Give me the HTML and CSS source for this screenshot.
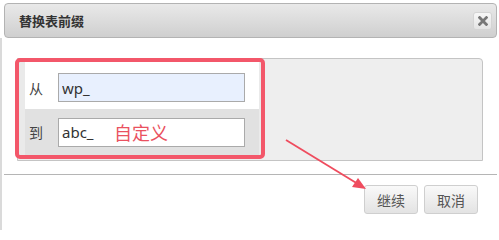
FILE: index.html
```html
<!DOCTYPE html>
<html lang="zh">
<head>
<meta charset="utf-8">
<title>替换表前缀</title>
<link rel="stylesheet" href="styles.css">
</head>
<body>
<div class="dialog">
  <div class="titlebar">
    <span class="title">替换表前缀</span>
    <button class="close" aria-label="关闭">
      <svg width="10" height="10" viewBox="0 0 10 10"><path d="M1.6 1.6 L8.4 8.4 M8.4 1.6 L1.6 8.4" stroke="#777" stroke-width="2.8" stroke-linecap="square"/></svg>
    </button>
  </div>
  <div class="body">
    <div class="panel">
      <div class="highlight">
        <div class="row row-from">
          <span class="label">从</span>
          <input class="field field-blue" value="wp_">
        </div>
        <div class="row row-to">
          <span class="label">到</span>
          <div class="field-wrap">
            <input class="field" value="abc_">
            <span class="note">自定义</span>
          </div>
        </div>
      </div>
    </div>
    <div class="divider"></div>
    <div class="footer">
      <button class="btn">继续</button>
      <button class="btn">取消</button>
    </div>
  </div>
  <svg class="arrow" width="499" height="230" viewBox="0 0 499 230">
    <line x1="286" y1="140" x2="358" y2="184" stroke="#ef4c5e" stroke-width="1.8"/>
    <polygon points="366,189 352,187 358,178" fill="#ef4c5e"/>
  </svg>
</div>
</body>
</html>
```
FILE: styles.css
```css
html, body {
  margin: 0;
  padding: 0;
  background: #ffffff;
}

body {
  font-family: "Noto Sans", "Noto Sans CJK SC", sans-serif;
  color: #333;
}

.dialog {
  position: relative;
  width: 499px;
  height: 230px;
  overflow: hidden;
  background: #fff;
}

.titlebar {
  box-sizing: border-box;
  margin: 3px 2px 0 4px;
  height: 35px;
  border: 1px solid #b3b3b3;
  border-radius: 4px;
  background: linear-gradient(#e9e9e9, #cfcfcf);
  display: flex;
  align-items: center;
  justify-content: space-between;
  padding: 0 4px 0 14px;
}

.title {
  font-family: "Noto Sans CJK SC", sans-serif;
  font-weight: bold;
  font-size: 13px;
  color: #333;
  margin-top: -1px;
}

.close {
  box-sizing: border-box;
  width: 19px;
  height: 18px;
  padding: 0;
  border: 1px solid #d4d4d4;
  border-radius: 3px;
  background: linear-gradient(#f7f7f7, #e4e4e4);
  display: flex;
  align-items: center;
  justify-content: center;
}

.body {
  box-sizing: border-box;
  height: 193px;
  border-left: 2px solid #dadada;
  padding-top: 20px;
}

.panel {
  box-sizing: border-box;
  margin-left: 15px;
  width: 466px;
  height: 103px;
  border: 1px solid #c4c4c4;
  border-radius: 0 4px 0 0;
  background: #eeeeee;
}

.highlight {
  box-sizing: border-box;
  width: 250px;
  height: 101px;
  margin: -1px 0 0 -3px;
  border: 4px solid #f3576a;
  border-radius: 5px;
  background: #eaeaea;
  padding: 0 2px 0 6px;
  display: flex;
  flex-direction: column;
}

.row {
  display: flex;
  align-items: center;
  box-sizing: border-box;
}

.row-from {
  height: 47px;
  padding-top: 4px;
  background: #ffffff;
}

.row-to {
  height: 46px;
  background: #e1e1e1;
}

.label {
  width: 33px;
  box-sizing: border-box;
  padding-left: 4px;
  font-family: "Noto Sans CJK SC", sans-serif;
  font-size: 14px;
  color: #444;
}

.field-wrap {
  position: relative;
  display: flex;
}

.field {
  box-sizing: border-box;
  width: 187px;
  height: 29px;
  margin: 0;
  border: 1px solid #aaaaaa;
  background: #ffffff;
  padding: 0 0 0 3px;
  font-family: "Noto Sans", "Noto Sans CJK SC", sans-serif;
  font-size: 15px;
  color: #333;
  outline: none;
}

.field-blue {
  background: #e8f0fe;
}

.note {
  position: absolute;
  left: 56px;
  top: 2px;
  font-family: "Noto Sans CJK SC", sans-serif;
  font-size: 18px;
  line-height: 24px;
  color: #ea5160;
}

.divider {
  margin: 13px 0 0 2px;
  width: 493px;
  height: 1px;
  background: #b5b5b5;
}

.footer {
  display: flex;
  justify-content: flex-end;
  gap: 6px;
  padding: 10px 21px 0 0;
}

.btn {
  box-sizing: border-box;
  width: 54px;
  height: 29px;
  border: 1px solid #cfcfcf;
  border-radius: 3px;
  background: linear-gradient(#f9f9f9, #e3e3e3);
  font-family: "Noto Sans CJK SC", sans-serif;
  font-size: 14px;
  color: #555;
  padding: 0;
}

.arrow {
  position: absolute;
  left: 0;
  top: 0;
  pointer-events: none;
}
```
